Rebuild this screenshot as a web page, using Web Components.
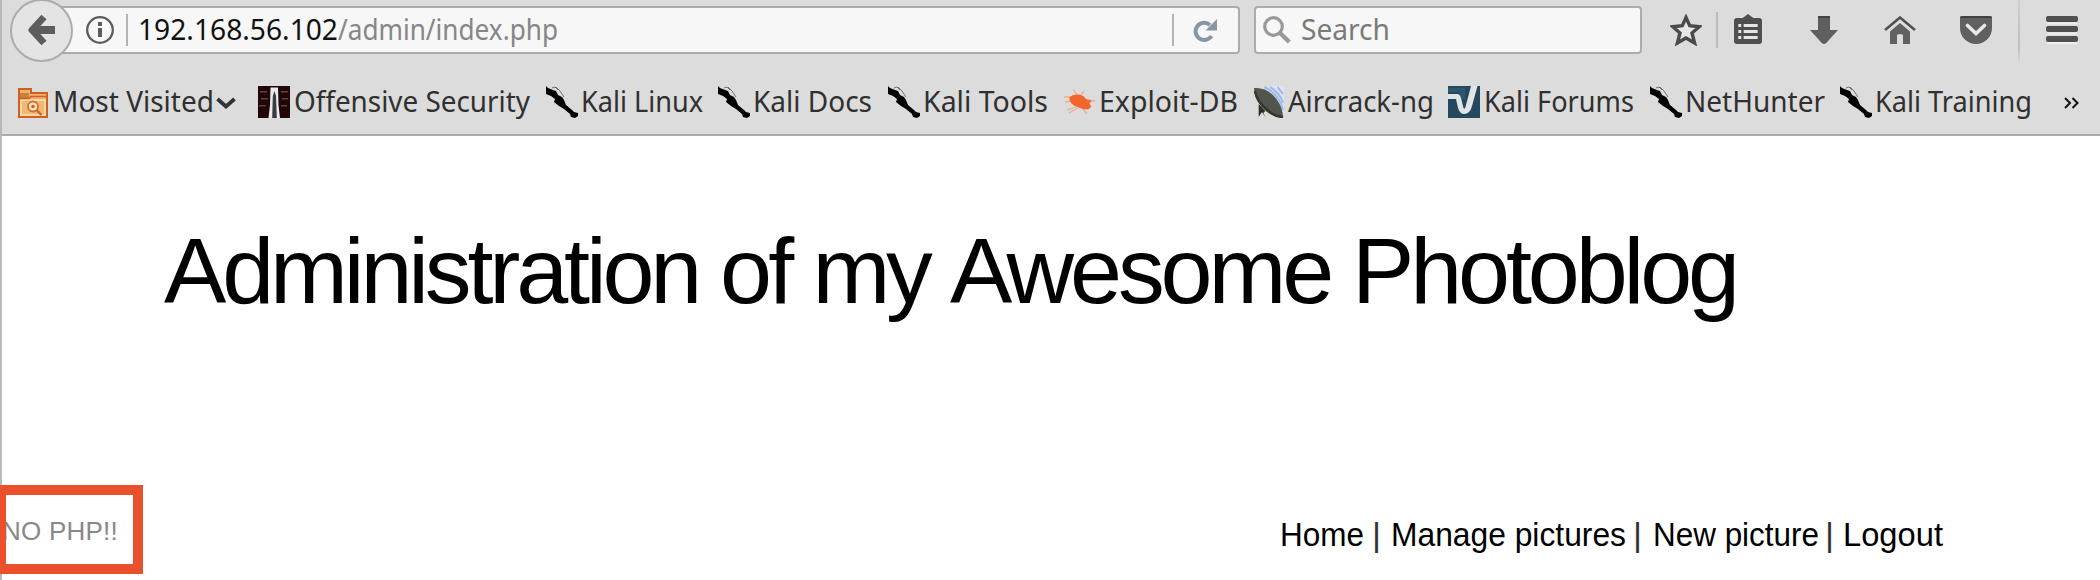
<!DOCTYPE html>
<html lang="en">
<head>
<meta charset="utf-8">
<title>Administration of my Awesome Photoblog</title>
<style>
html,body{margin:0;height:580px;overflow:hidden;background:#fff}
</style>
</head>
<body>
<browser-window></browser-window>
<script>
const define = (name, html, setup) => customElements.define(name, class extends HTMLElement {
  connectedCallback() {
    if (this.shadowRoot) return;
    const root = this.attachShadow({ mode: 'open' });
    root.innerHTML = html;
    if (setup) setup(this, root);
  }
});

// A single line of text that fills the width given by its "w" attribute:
// the glyphs are condensed, or only tracked when the "track" attribute is set.
define('fit-text', `<style>
:host{display:block;white-space:pre;flex:none}
span{display:inline-block;white-space:pre;transform-origin:0 50%}
</style><span></span>`, (host, root) => {
  const s = root.querySelector('span');
  s.textContent = host.getAttribute('text');
  const w = +host.getAttribute('w');
  host.style.width = w + 'px';
  const natural = s.getBoundingClientRect().width;
  if (host.hasAttribute('track')) s.style.letterSpacing = (w - natural) / s.textContent.length + 'px';
  else s.style.transform = `scaleX(${w / natural})`;
});

const ICONS = {
  back: ['0 0 28 32', '<path d="M16 3L4 16L16 29" fill="none" stroke="#5d5d5d" stroke-width="7" stroke-linejoin="round"/><path d="M5 16H27" stroke="#5d5d5d" stroke-width="8"/>'],
  info: ['0 0 28 28', '<circle cx="14" cy="14" r="12.800" fill="none" stroke="#5c5c5c" stroke-width="2.300"/><path d="M12 12h4v9h-4zM12 6h4v4h-4z" fill="#5c5c5c"/>'],
  reload: ['0 0 24 24', '<path d="M18.500 17A8.600 8.600 0 1 1 17 6" fill="none" stroke="#8796a5" stroke-width="4"/><path d="M24 0V11.500H12.500Z" fill="#8796a5"/>'],
  search: ['0 0 28 28', '<circle cx="10.500" cy="10.500" r="8.800" fill="none" stroke="#999" stroke-width="3.200"/><path d="M17 17L26.300 26" stroke="#999" stroke-width="4.400"/>'],
  star: ['0 0 32 32', '<path d="M16 3.500L19.700 11.700L29.300 12.700L22 19L24.600 29L16 24L7.400 29L10 19L2.700 12.700L12.300 11.700Z" fill="#e6e6e6" stroke="#4a4a4a" stroke-width="3.400"/>'],
  list: ['0 0 29 30', '<path d="M0 7Q0 4 3 4H9L14.500 0L20 4H26Q29 4 29 7V27Q29 30 26 30H3Q0 30 0 27Z" fill="#4f4f4f"/><path d="M4.500 10h3v3h-3zM4.500 16h3v3h-3zM4.500 22h3v3h-3zM10 10h14.500v3H10zM10 16h14.500v3H10zM10 22h14.500v3H10z" fill="#e6e6e6"/>'],
  down: ['0 0 28 28', '<path d="M8 0H20V14H28L16 27.300Q14 28.500 12 27.300L0 14H8Z" fill="#5f5f5f"/><path d="M8 0H20V2H8z" fill="#454545"/>'],
  home: ['0 0 32 28', '<path d="M1 14L16 1.500L31 14" fill="none" stroke="#4f4f4f" stroke-width="2.500"/><path d="M6 15.500L16 7L26 15.500V28H19V19.500Q19 18 16 18Q13 18 13 19.500V28H6Z" fill="#616161"/>'],
  pocket: ['0 0 32 28', '<path d="M2 0H30Q32 0 32 2V12A16 16 0 0 1 0 12V2Q0 0 2 0Z" fill="#606060"/><path d="M0 2Q0 0 2 0H30Q32 0 32 2z" fill="#424242"/><path d="M7.500 9.500L16 17.500L24.500 9.500" fill="none" stroke="#e8e8e8" stroke-width="3.600" stroke-linecap="round"/>'],
  menu: ['0 0 32 28', '<path d="M1 6.500h30v2H1zM1 16.500h30v2H1zM1 26h30v2H1z" fill="#eee"/><rect width="32" height="6" rx="2" fill="#505050"/><rect y="10" width="32" height="6" rx="2" fill="#505050"/><rect y="20" width="32" height="6" rx="2" fill="#505050"/>'],
  folder: ['0 0 30 30', '<path d="M1 1H13V5H29V29H1Z" fill="#efb06c" stroke="#cf5f23" stroke-width="2"/><path d="M2 5h9v5H2z" fill="#c8823f"/><path d="M3 12V27H27V12Z" fill="#f0b871" stroke="#fbe3bf" stroke-width="1.500"/><path d="M1 10.500H11L13 8.500H29" fill="none" stroke="#cf5f23" stroke-width="1.600"/><circle cx="15" cy="18.500" r="5" fill="#fbe5c8" stroke="#d4702f" stroke-width="1.800"/><circle cx="15" cy="18.500" r="1.800" fill="#cf5f23"/><path d="M19 22.500L23.500 27" stroke="#cf5f23" stroke-width="2.200"/>'],
  chevron: ['0 0 20 12', '<path d="M1.500 2L10 9.500L18.500 2" fill="none" stroke="#333" stroke-width="3.800"/>'],
  offsec: ['0 0 32 32', '<path d="M0 0H32V32H0Z" fill="#210607"/><path d="M2 5h7v1.500H2zM3 12h7v1.500H3zM1 19h7v1.500H1zM23 5h7v1.500h-7zM24 12h6v1.500h-6zM23 19h6v1.500h-6z" fill="#5a4244"/><path d="M12.500 1.500H20L20.500 19L22 32H10.500L12 19Z" fill="#ebebeb"/><path d="M14.800 10L16.500 5L18 10L18.800 32H14.200Z" fill="#3a3c40"/>'],
  kali: ['0 0 32 32', '<path d="M0 0L2 2L7 4L10 5L12 9L16 11L18 14L20 19L26 24L28 26L32 27V30L29 32L25 31L24 28L18 23L13 20L8 16L9 13L5 10L0 8Z"/><path d="M6 2L9 1L12 4M10 1L14 5L18 11" fill="none" stroke="#555" stroke-width=".8"/>'],
  exploit: ['0 0 32 26', '<path d="M0 8H6M1 13L7 12M3 21L12 18M5 24L14 19M9 0L13 6M20 2L17 6M31 12L24 11M25 16L28 18M19 20L23 25" stroke="#f1ad90" stroke-width="1.300"/><path d="M5.500 8Q9 5 14 5.500Q20 6 22 10L28 12L25.500 14L27 18L24 20.500Q18 20.500 12 17.500Q7 15 5.500 11Z" fill="#f0662c"/>'],
  aircrack: ['0 0 32 32', '<path d="M8 0H32V31Q29 12 8 0Z" fill="#dce6f7"/><path d="M11 1Q27 8 31 24M17 1Q28 7 31 17M25 1L31 8" fill="none" stroke="#9db8e8" stroke-width="2"/><path d="M5 18L12 25L10 27L12 31L8.500 26L5 31Z" fill="#302c20"/><path d="M0 2Q14 1 24 13Q31 22 31 32Q19 32 8 21Q0 12 0 2Z" fill="#52554c"/><path d="M1 5Q3 15 12 22Q20 30 31 31" fill="none" stroke="#35372f" stroke-width="2.500"/>'],
  forums: ['0 0 32 32', '<path d="M0 0H32V32H0Z" fill="#24495f"/><path d="M0 2H17V13H13L11 6H0Z" fill="#2d5870"/><path d="M0 8H9Q12 8 13 12L15.500 22Q16.500 24 17.500 21L23 0H29.500L24 20Q22 28 16 28Q12 28 10 22L8 13H0Z" fill="#e2e5e5"/>'],
  more: ['0 0 15 12', '<path d="M1 1L6 6L1 11M8.500 1L13.500 6L8.500 11" fill="none" stroke="#111" stroke-width="2"/>']
};
define('ui-icon', `<style>:host{display:block;flex:none}svg{display:block;width:100%;height:100%}</style><svg preserveAspectRatio="none"></svg>`, (host, root) => {
  const [box, body] = ICONS[host.getAttribute('name')];
  const svg = root.querySelector('svg');
  svg.setAttribute('viewBox', box);
  svg.innerHTML = body;
  host.style.width = host.getAttribute('w') + 'px';
  host.style.height = host.getAttribute('h') + 'px';
});

define('address-bar', `<style>
:host{box-sizing:border-box;display:flex;align-items:flex-start;width:1198px;height:48px;margin:6px 0 0 -31px;border:2px solid #acacac;border-left:0;border-radius:0 4px 4px 0;background:#f7f7f7;flex:none}
ui-icon,i{flex:none}
i{width:2px;height:32px;background:#b4b4b4;margin-top:6px}
fit-text{font-size:29.500px;line-height:40px;color:#111;margin-top:1px}
fit-text.path{color:#868686}
</style>
<ui-icon name="info" w="28" h="28" style="margin:8px 0 0 44px"></ui-icon>
<i style="margin-left:12px"></i>
<fit-text text="192.168.56.102" w="200" style="margin-left:10px"></fit-text>
<fit-text class="path" text="/admin/index.php" w="220"></fit-text>
<i style="margin-left:614px"></i>
<ui-icon name="reload" w="24" h="24" style="margin:11px 0 0 19px"></ui-icon>`);

define('search-box', `<style>
:host{box-sizing:border-box;display:flex;align-items:flex-start;width:388px;height:48px;margin:6px 0 0 14px;border:2px solid #acacac;border-radius:4px;background:#f7f7f7;flex:none}
fit-text{font-size:29.500px;line-height:40px;color:#7a7a7a;margin:1px 0 0 10px}
</style><ui-icon name="search" w="28" h="28" style="margin:8px 0 0 7px"></ui-icon><fit-text text="Search" w="89"></fit-text>`);

define('nav-toolbar', `<style>
:host{display:flex;align-items:flex-start;height:66px}
.back{box-sizing:border-box;width:63px;height:63px;margin:-1px 0 0 8px;border:2px solid #acacac;border-radius:50%;background:#e4e4e4;z-index:1;flex:none;display:flex}
.sep{width:2px;height:36px;background:#bcbcbc;margin:12px 0 0 14px;flex:none}
.fade{width:2px;height:66px;background:linear-gradient(#cfcfcf,#bebebe 70%,#dcdcdc);margin-left:26px;flex:none}
</style>
<div class="back"><ui-icon name="back" w="28" h="32" style="margin:13px 0 0 16px"></ui-icon></div>
<address-bar></address-bar><search-box></search-box>
<ui-icon name="star" w="32" h="32" style="margin:14px 0 0 28px"></ui-icon><div class="sep"></div>
<ui-icon name="list" w="28" h="30" style="margin:14px 0 0 16px"></ui-icon>
<ui-icon name="down" w="28" h="28" style="margin:16px 0 0 48px"></ui-icon>
<ui-icon name="home" w="32" h="28" style="margin:16px 0 0 46px"></ui-icon>
<ui-icon name="pocket" w="32" h="28" style="margin:16px 0 0 44px"></ui-icon>
<div class="fade"></div>
<ui-icon name="menu" w="32" h="28" style="margin:16px 0 0 26px"></ui-icon>`);

// icon, icon x, icon width, icon y, icon height, label, label x, label width
const MARKS = [
 ['folder',18,30,88,30,'Most Visited',53,161],
 ['offsec',258,32,86,32,'Offensive Security',294,236],
 ['kali',546,32,86,32,'Kali Linux',580.5,122],
 ['kali',718,32,86,32,'Kali Docs',753,119],
 ['kali',888,32,86,32,'Kali Tools',923,125],
 ['exploit',1064,32,89,26,'Exploit-DB',1099,139],
 ['aircrack',1254,30,86,32,'Aircrack-ng',1288,146],
 ['forums',1448,32,86,32,'Kali Forums',1483.5,150],
 ['kali',1650,32,86,32,'NetHunter',1685,140],
 ['kali',1840,32,86,32,'Kali Training',1875,157]
];
define('bookmark-item', `<style>
:host{display:flex;align-items:flex-start;flex:none}
fit-text{font-size:29.500px;line-height:40px;color:#303030;margin-top:15px}
</style><slot></slot>`, (host, root) => {
  const [n, ix, iw, iy, ih, label, lx, lw] = MARKS[host.getAttribute('index')];
  root.querySelector('slot').insertAdjacentHTML('beforebegin',
   `<ui-icon name="${n}" w="${iw}" h="${ih}" style="margin-top:${iy - 66}px"></ui-icon><fit-text text="${label}" w="${lw}" style="margin-left:${lx - ix - iw}px"></fit-text>`);
});
define('bookmarks-bar', `<style>
:host{display:flex;align-items:flex-start;height:68px;border-bottom:2px solid #acacac}
</style>`, (host, root) => {
  let x = 2;
  MARKS.forEach((m, i) => {
    const el = document.createElement('bookmark-item');
    el.setAttribute('index', i);
    el.style.marginLeft = m[1] - x + 'px';
    x = m[6] + m[7];
    if (i === 0) { el.innerHTML = '<ui-icon name="chevron" w="20" h="12" style="margin:31px 0 0 2px"></ui-icon>'; x += 22; }
    root.append(el);
  });
  root.lastElementChild.insertAdjacentHTML('afterend', '<ui-icon name="more" w="15" h="12" style="margin:31px 0 0 32px"></ui-icon>');
});

define('page-header', `<style>
:host{display:flex;height:349px}
h1{display:flex;margin:80px 0 0 162px;font:400 93.500px/110px "Liberation Sans",Arial,sans-serif;color:#000}
</style><h1><fit-text track text="Administration " w="556"></fit-text><fit-text track text="of " w="92.5"></fit-text><fit-text track text="my " w="137.5"></fit-text><fit-text track text="Awesome " w="402"></fit-text><fit-text track text="Photoblog" w="384"></fit-text></h1>`);

define('page-notice', `<style>
:host{box-sizing:border-box;display:block;width:143px;height:89px;margin-left:-2px;border:10px solid #ea502b;border-left-width:6px;overflow:hidden;flex:none}
fit-text{font-size:26px;line-height:30px;color:#888;margin:21px 0 0 -4px}
</style><fit-text track text="NO PHP!!" w="116"></fit-text>`);

define('page-menu', `<style>
:host{display:flex;font-size:33px;line-height:38px;color:#000;margin:31px 0 0 1137px}
fit-text.bar{color:#333}
</style>
<fit-text text="Home" w="84"></fit-text><fit-text class="bar" text="|" w="9" style="margin-left:8px"></fit-text>
<fit-text text="Manage pictures" w="235" style="margin-left:10px"></fit-text><fit-text class="bar" text="|" w="9" style="margin-left:7px"></fit-text>
<fit-text text="New picture" w="166" style="margin-left:11px"></fit-text><fit-text class="bar" text="|" w="9" style="margin-left:6px"></fit-text>
<fit-text text="Logout" w="100" style="margin-left:9px"></fit-text>`);

define('browser-window', `<style>
:host{display:block;box-sizing:border-box;width:2100px;height:580px;border-left:2px solid #b9b9b9}
.chrome{background:#dcdcdc;font-family:"Noto Sans","Open Sans",sans-serif}
.foot{display:flex;align-items:flex-start;font-family:"Liberation Sans",Arial,sans-serif}
</style>
<div class="chrome"><nav-toolbar></nav-toolbar><bookmarks-bar></bookmarks-bar></div>
<page-header></page-header>
<div class="foot"><page-notice></page-notice><page-menu></page-menu></div>`);
</script>
</body>
</html>
